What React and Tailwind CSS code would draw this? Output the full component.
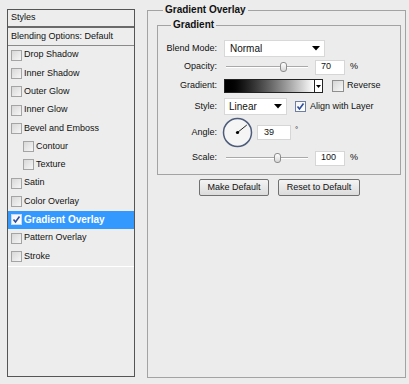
import React from 'react'

const items = [
  { label: 'Drop Shadow' },
  { label: 'Inner Shadow' },
  { label: 'Outer Glow' },
  { label: 'Inner Glow' },
  { label: 'Bevel and Emboss' },
  { label: 'Contour', indent: true },
  { label: 'Texture', indent: true },
  { label: 'Satin' },
  { label: 'Color Overlay' },
  { label: 'Gradient Overlay', active: true },
  { label: 'Pattern Overlay' },
  { label: 'Stroke' },
]

function Check({ checked, blue }) {
  if (checked) {
    return (
      <span className={`w-[11px] h-[11px] shrink-0 border ${blue ? 'border-[#6f7f9f]' : 'border-[#c8d8ee]'} bg-gradient-to-br from-[#f4f4f4] to-white flex items-center justify-center`}>
        <svg width="9" height="9" viewBox="0 0 9 9">
          <path d="M1.5 4.5 L3.5 7 L7.5 1.5" fill="none" stroke="#2c4ca0" strokeWidth="1.6" />
        </svg>
      </span>
    )
  }
  return <span className="w-[11px] h-[11px] shrink-0 border border-[#a4a4a4] bg-gradient-to-br from-[#d8d8d8] to-[#f6f6f6]" />
}

function Arrow() {
  return (
    <svg width="8" height="5" viewBox="0 0 8 5">
      <path d="M0 0 H8 L4 4.5 Z" fill="#000" />
    </svg>
  )
}

function Slider({ thumb }) {
  return (
    <div className="relative w-[82px] h-[14px] ml-[2px] flex items-center">
      <div className="w-full h-[2px] border-t border-[#a9a9a9] border-b-white border-b" />
      <span
        className="absolute top-[2px] w-[7px] h-[10px] rounded-[3px] border border-[#8c8c8c] bg-gradient-to-b from-white to-[#d6d6d6]"
        style={{ left: thumb }}
      />
    </div>
  )
}

function Row({ label, children, className = '' }) {
  return (
    <div className={`flex items-center ${className}`}>
      <span className="w-[60px] text-right pr-[1px]">{label}</span>
      <div className="flex items-center ml-[6px]">{children}</div>
    </div>
  )
}

function Field({ w, children, pl = 'pl-[5px]' }) {
  return (
    <div className={`${w} h-[15px] bg-white border border-[#d6d6d6] ${pl} flex items-center`}>{children}</div>
  )
}

export default function App() {
  return (
    <div className="w-[409px] h-[384px] bg-[#ececec] flex pt-[4px] pl-[7px] font-['Liberation_Sans',Arial,sans-serif] text-[9px] text-[#111] overflow-hidden">
      <div className="mt-[5px] w-[128px] h-[368px] border border-[#555] bg-[#ededed] flex flex-col">
        <div className="h-[18px] flex items-center pl-[3px] border-b-2 border-[#6a6a6a]">Styles</div>
        <div className="h-[18px] flex items-center pl-[3px] border-b border-[#8a8a8a]">Blending Options: Default</div>
        {items.map((it) => (
          <div
            key={it.label}
            className={`h-[18.3px] flex items-center gap-[2px] ${it.indent ? 'pl-[15px]' : 'pl-[3px]'} ${it.active ? 'bg-[#3399ff] text-white font-bold text-[10px]' : ''}`}
          >
            <Check checked={it.active} />
            <span>{it.label}</span>
          </div>
        ))}
        <div className="border-t border-white" />
      </div>

      <fieldset className="ml-[12px] w-[259px] h-[374px] border border-[#a3a3a3]">
        <legend className="ml-[15px] px-[2px] text-[10px] font-bold leading-[12px]">Gradient Overlay</legend>
        <fieldset className="mt-[3px] ml-[9px] w-[244px] border border-[#a3a3a3] pb-[9px]">
          <legend className="ml-[13px] px-[2px] text-[10px] font-bold leading-[12px]">Gradient</legend>
          <Row label="Blend Mode:" className="mt-[9px] h-[17px]">
            <div className="w-[101px] h-[17px] bg-white border border-[#d8d8d8] pl-[5px] pr-[4px] flex items-center justify-between text-[10px]">
              <span>Normal</span>
              <Arrow />
            </div>
          </Row>
          <Row label="Opacity:" className="mt-[2px] h-[16px]">
            <Slider thumb={54} />
            <div className="ml-[7px]"><Field w="w-[30px]">70</Field></div>
            <span className="ml-[5px]">%</span>
          </Row>
          <Row label="Gradient:" className="mt-[4px] h-[14px]">
            <div className="w-[99px] h-[14px] border border-[#222] flex">
              <div className="flex-1 bg-gradient-to-r from-black to-white" />
              <div className="w-[8px] border-l border-[#222] bg-white flex items-center justify-center">
                <svg width="5" height="3" viewBox="0 0 5 3"><path d="M0 0 H5 L2.5 3 Z" fill="#000" /></svg>
              </div>
            </div>
            <span className="ml-[9px] w-[12px] h-[12px] border border-[#8f8f8f] bg-gradient-to-br from-[#d6d6d6] to-[#f8f8f8]" />
            <span className="ml-[3px]">Reverse</span>
          </Row>
          <Row label="Style:" className="mt-[5px] h-[17px]">
            <div className="w-[63px] h-[17px] bg-white border border-[#d8d8d8] pl-[4px] pr-[4px] flex items-center justify-between text-[10px]">
              <span>Linear</span>
              <Arrow />
            </div>
            <span className="ml-[8px]"><Check checked blue /></span>
            <span className="ml-[4px]">Align with Layer</span>
          </Row>
          <Row label="Angle:" className="mt-[2px] h-[31px]">
            <svg width="31" height="31" viewBox="0 0 31 31" className="-ml-[2px]">
              <circle cx="15.5" cy="15.5" r="14" fill="#f5f5f5" stroke="#4d5c7a" strokeWidth="1.5" />
              <line x1="15.5" y1="15.5" x2="24.8" y2="8" stroke="#222" strokeWidth="1" />
              <circle cx="15.5" cy="15.5" r="1.6" fill="#000" />
            </svg>
            <div className="ml-[4px]"><Field w="w-[34px]" pl="pl-[6px]">39</Field></div>
            <span className="ml-[4px] -mt-[6px] text-[8px]">°</span>
          </Row>
          <Row label="Scale:" className="mt-[3px] h-[14px]">
            <Slider thumb={48} />
            <div className="ml-[7px]"><Field w="w-[30px]">100</Field></div>
            <span className="ml-[5px]">%</span>
          </Row>
        </fieldset>
        <div className="mt-[4px] pl-[51px] flex gap-[9px]">
          <button className="w-[70px] h-[17px] rounded-[2px] border border-[#707070] bg-gradient-to-b from-[#f4f4f4] to-[#dcdcdc] text-[9px]">Make Default</button>
          <button className="w-[82px] h-[17px] rounded-[2px] border border-[#707070] bg-gradient-to-b from-[#f4f4f4] to-[#dcdcdc] text-[9px]">Reset to Default</button>
        </div>
      </fieldset>
    </div>
  )
}
